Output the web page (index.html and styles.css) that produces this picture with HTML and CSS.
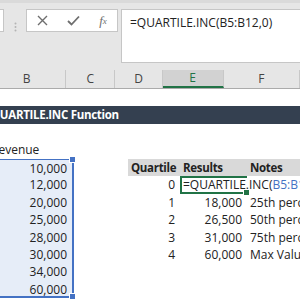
FILE: index.html
```html
<!DOCTYPE html>
<html lang="en">
<head>
    <meta charset="UTF-8">
    <title>QUARTILE.INC</title>
    <link rel="stylesheet" href="styles.css">
</head>
<body>
    <div class="toolbar">
        <div class="namebox"></div>
        <div class="grip">
            <svg width="3" height="10" viewBox="0 0 3 10"><circle cx="1.5" cy="1.5" r="1" fill="#b4b4b4"/><circle cx="1.5" cy="5" r="1" fill="#b4b4b4"/><circle cx="1.5" cy="8.5" r="1" fill="#b4b4b4"/></svg>
        </div>
        <div class="fbuttons">
            <span class="slot"><svg width="11" height="11" viewBox="0 0 11 11"><path d="M1 1 L10 10 M10 1 L1 10" stroke="#6e6e6e" stroke-width="1.4"/></svg></span>
            <span class="slot"><svg width="13" height="11" viewBox="0 0 13 11"><path d="M1 6 L4.5 9.5 L12 1.5" stroke="#6e6e6e" stroke-width="1.8" fill="none"/></svg></span>
            <span class="slot fx">f<sub>x</sub></span>
        </div>
        <div class="fbar">=QUARTILE.INC(B5:B12,0)</div>
    </div>

    <div class="colheads">
        <div class="ch w-b">B</div>
        <div class="ch w-c">C</div>
        <div class="ch w-d">D</div>
        <div class="ch w-e active">E</div>
        <div class="ch w-f">F</div>
    </div>

    <div class="sheet">
        <div class="row h17"></div>
        <div class="row h18 title"><div class="cell w-b text bold">QUARTILE.INC Function</div></div>
        <div class="row h17"></div>
        <div class="row h18"><div class="cell w-b text">Revenue</div></div>
        <div class="row h17">
            <div class="cell w-b num rng first">10,000<span class="knob top"></span></div>
            <div class="cell w-c"></div>
            <div class="cell w-d text bold head">Quartile</div>
            <div class="cell w-e text bold head">Results</div>
            <div class="cell w-f text bold head">Notes</div>
        </div>
        <div class="row h18">
            <div class="cell w-b num rng">12,000</div>
            <div class="cell w-c"></div>
            <div class="cell w-d num">0</div>
            <div class="cell w-e text editing">=QUARTILE.INC(<span class="ref">B5:B12</span>,0)<span class="fill"></span></div>
            <div class="cell w-f"></div>
        </div>
        <div class="row h17">
            <div class="cell w-b num rng">20,000</div>
            <div class="cell w-c"></div>
            <div class="cell w-d num">1</div>
            <div class="cell w-e num">18,000</div>
            <div class="cell w-f text">25th percentile</div>
        </div>
        <div class="row h18">
            <div class="cell w-b num rng">25,000</div>
            <div class="cell w-c"></div>
            <div class="cell w-d num">2</div>
            <div class="cell w-e num">26,500</div>
            <div class="cell w-f text">50th percentile</div>
        </div>
        <div class="row h17">
            <div class="cell w-b num rng">28,000</div>
            <div class="cell w-c"></div>
            <div class="cell w-d num">3</div>
            <div class="cell w-e num">31,000</div>
            <div class="cell w-f text">75th percentile</div>
        </div>
        <div class="row h17">
            <div class="cell w-b num rng">30,000</div>
            <div class="cell w-c"></div>
            <div class="cell w-d num">4</div>
            <div class="cell w-e num">60,000</div>
            <div class="cell w-f text">Max Value</div>
        </div>
        <div class="row h18">
            <div class="cell w-b num rng">34,000</div>
        </div>
        <div class="row h17">
            <div class="cell w-b num rng last">60,000<span class="knob bottom"></span></div>
        </div>
    </div>
</body>
</html>
```

FILE: styles.css
```css
body {
    margin: 0;
    width: 300px;
    height: 300px;
    overflow: hidden;
    background: #fff;
    font-family: 'Open Sans', 'Noto Sans', sans-serif;
}
.toolbar {
    display: flex;
    align-items: flex-start;
    height: 70px;
    padding-top: 6px;
    box-sizing: border-box;
    background: #e6e6e6;
    border-top: 3px solid #dadada;
}
.namebox {
    width: 3px;
    height: 21px;
    margin-left: -1px;
    background: #fff;
    border: 1px solid #c6c6c6;
}
.grip {
    width: 9px;
    padding: 6px 0 0 10px;
}
.fbuttons {
    display: flex;
    align-items: center;
    width: 90px;
    height: 21px;
    margin-left: 3px;
    background: #fff;
    border: 1px solid #c6c6c6;
}
.slot {
    display: flex;
    justify-content: center;
    align-items: center;
    width: 31px;
}
.slot + .slot + .slot {
    width: 28px;
}
.fx {
    font-family: 'Liberation Serif', serif;
    font-style: italic;
    font-size: 13px;
    color: #6e6e6e;
}
.fx sub {
    font-size: 9px;
}
.fbar {
    flex: 1;
    height: 54px;
    margin-left: 3px;
    padding: 4px 8px;
    box-sizing: border-box;
    background: #fff;
    border: 1px solid #c6c6c6;
    border-right: none;
    font-size: 12px;
    color: #222;
    white-space: nowrap;
}
.colheads {
    display: flex;
    height: 18px;
    margin-left: -12px;
    background: #e6e6e6;
    border-bottom: 1px solid #ababab;
}
.ch {
    box-sizing: border-box;
    border-right: 1px solid #c8c8c8;
    text-align: center;
    font-size: 12px;
    line-height: 18px;
    color: #444;
}
.ch.active {
    background: #d2d2d2;
    color: #217346;
    border-bottom: 2px solid #217346;
    line-height: 16px;
}
.w-b { width: 86px; }
.w-c { width: 54px; }
.w-d { width: 52px; }
.w-e { width: 67px; }
.w-f { width: 84px; }

.sheet {
    margin-left: -12px;
    font-size: 12px;
    color: #222;
}
.row {
    display: flex;
    white-space: nowrap;
}
.h17 { height: 17px; }
.h18 { height: 18px; }
.cell {
    position: relative;
    flex: none;
    box-sizing: border-box;
    line-height: 17px;
}
.text {
    padding-left: 3px;
}
.num {
    padding-right: 5px;
    text-align: right;
}
.bold {
    font-weight: bold;
    font-size: 11.5px;
    letter-spacing: -0.3px;
}
.title {
    width: 320px;
    background: #344050;
    color: #fff;
}
.title .cell {
    line-height: 18px;
}
.head {
    background: #d9d9d9;
}
.rng {
    background: #e6edf8;
    border-right: 2px solid #4472c4;
}
.rng.first {
    border-top: 1px solid #4472c4;
}
.rng.last {
    border-bottom: 2px solid #4472c4;
}
.knob {
    position: absolute;
    right: -4px;
    width: 5px;
    height: 5px;
    background: #4472c4;
    border: 1px solid #fff;
}
.knob.top { top: -4px; }
.knob.bottom { bottom: -4px; }
.editing {
    overflow: visible;
    border: 2px solid #217346;
    border-right: none;
    line-height: 14px;
    padding-left: 1px;
}
.ref {
    color: #4472c4;
}
.fill {
    position: absolute;
    right: -3px;
    bottom: -4px;
    width: 5px;
    height: 5px;
    background: #217346;
    border: 1px solid #fff;
}
```
